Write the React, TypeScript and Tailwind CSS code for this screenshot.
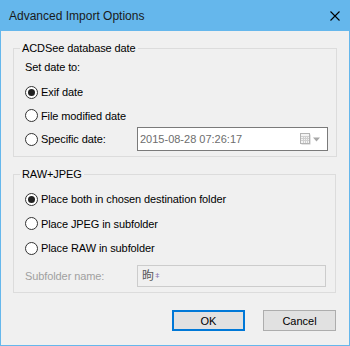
import React from "react";

const font = { fontFamily: '"Liberation Sans", "Noto Sans CJK SC", sans-serif' };

function Radio({ checked, label }: { checked?: boolean; label: string }) {
  return (
    <span className="flex items-center">
      <span className="flex h-[13px] w-[13px] shrink-0 items-center justify-center rounded-full border border-[#333333] bg-white">
        {checked && <span className="h-[7px] w-[7px] rounded-full bg-[#222222]" />}
      </span>
      <span className="ml-[3px] text-[11px] leading-[16px] tracking-[-0.1px] text-black">{label}</span>
    </span>
  );
}

function Group({ title, children }: { title: string; children: React.ReactNode }) {
  return (
    <fieldset className="ml-[12px] w-[323px] border border-[#dcdcdc] p-0">
      <legend className="ml-[6px] px-[2px] text-[11px] leading-[16px] tracking-[-0.1px] text-black">{title}</legend>
      {children}
    </fieldset>
  );
}

function CalendarIcon() {
  return (
    <svg width="11" height="12" viewBox="0 0 11 12">
      <rect x="1.5" y="1.5" width="9" height="10" fill="#c8c8c8" />
      <rect x="0.5" y="0.5" width="9" height="10" fill="#f4f4f4" stroke="#b4b4b4" />
      <path d="M1 3.5h8M1 5.5h8M1 7.5h8M3.5 3v7M5.5 3v7M7.5 3v7" stroke="#d0d0d0" strokeWidth="1" />
    </svg>
  );
}

export default function App() {
  return (
    <div style={font} className="flex h-[346px] w-[350px] flex-col border border-[#65b7ec] bg-[#f0f0f0]">
      <div className="flex h-[30px] shrink-0 items-center justify-between bg-[#65b7ec] pl-[8px] pr-[9px]">
        <span className="text-[12px] leading-[16px] text-[#1a1a1a]">Advanced Import Options</span>
        <svg width="10" height="10" viewBox="0 0 10 10">
          <path d="M0.5 0.5L9.5 9.5M9.5 0.5L0.5 9.5" stroke="#000" strokeWidth="1.1" />
        </svg>
      </div>

      <div className="mt-[9px]">
        <Group title="ACDSee database date">
          <div className="flex flex-col pl-[11px] pr-[8px] pb-[5px]">
            <div className="mt-[3px] text-[11px] leading-[16px] tracking-[-0.1px] text-black">Set date to:</div>
            <div className="mt-[5px] flex h-[24px] items-center">
              <Radio checked label="Exif date" />
            </div>
            <div className="flex h-[23px] items-center">
              <Radio label="File modified date" />
            </div>
            <div className="flex h-[24px] items-center">
              <div className="w-[112px] shrink-0">
                <Radio label="Specific date:" />
              </div>
              <div className="flex h-[24px] w-[191px] items-center border border-[#7a7a7a] bg-white pl-[2px] pr-[6px]">
                <span className="flex-1 text-[11px] leading-[16px] text-[#6d6d6d]">2015-08-28 07:26:17</span>
                <CalendarIcon />
                <svg width="8" height="5" viewBox="0 0 8 5" className="ml-[2px]">
                  <path d="M0 0.5h7L3.5 4.5z" fill="#a8a8a8" />
                </svg>
              </div>
            </div>
          </div>
        </Group>
      </div>

      <div className="mt-[9px]">
        <Group title="RAW+JPEG">
          <div className="flex flex-col pl-[11px] pr-[8px] pb-[5px]">
            <div className="mt-[5px] flex h-[24px] items-center">
              <Radio checked label="Place both in chosen destination folder" />
            </div>
            <div className="flex h-[25px] items-center">
              <Radio label="Place JPEG in subfolder" />
            </div>
            <div className="flex h-[24px] items-center">
              <Radio label="Place RAW in subfolder" />
            </div>
            <div className="mt-[5px] flex h-[22px] items-center">
              <div className="w-[112px] shrink-0 text-[11px] leading-[16px] tracking-[-0.1px] text-[#a0a0a0]">
                Subfolder name:
              </div>
              <div className="flex h-[22px] w-[189px] items-center border border-[#cccccc] bg-[#f0f0f0] pl-[4px]">
                <span className="text-[12px] leading-[16px] text-[#5a5a5a]">昫</span>
                <span className="ml-[1px] text-[8px] leading-[10px] text-[#8a7ab0]">ǂ</span>
              </div>
            </div>
          </div>
        </Group>
      </div>

      <div className="mt-[17px] flex justify-end gap-[18px] pr-[13px]">
        <button className="h-[21px] w-[73px] border-2 border-[#0078d7] bg-[#e1e1e1] text-[11px] leading-[16px] text-black">
          OK
        </button>
        <button className="h-[21px] w-[73px] border border-[#adadad] bg-[#e1e1e1] text-[11px] leading-[16px] text-black">
          Cancel
        </button>
      </div>
    </div>
  );
}
